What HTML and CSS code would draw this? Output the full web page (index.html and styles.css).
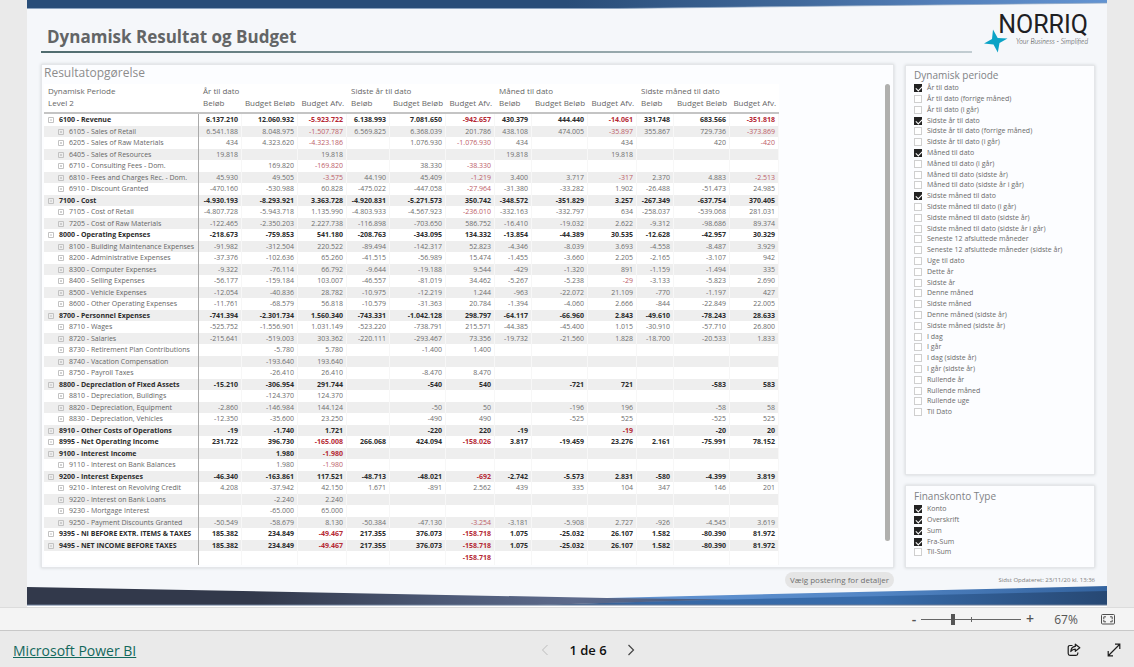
FILE: index.html
```html
<!DOCTYPE html>
<html lang="da">
<head>
<meta charset="utf-8">
<meta name="viewport" content="width=device-width, initial-scale=1">
<title>Dynamisk Resultat og Budget</title>
<link rel="stylesheet" href="styles.css">
</head>
<body>
<div class="app">
  <main class="report">
    <svg class="banner banner-top" viewBox="0 0 1080 9" preserveAspectRatio="none" aria-hidden="true">
      <defs><linearGradient id="top"><stop offset="0.5" stop-color="#294d78"/><stop offset="0.7" stop-color="#3f6798"/><stop offset="0.85" stop-color="#5480ba"/><stop offset="1" stop-color="#6394d2"/></linearGradient></defs>
      <path d="M0 0H1080V3L590 8.500H0Z" fill="url(#top)"/>
      <path d="M0 8.500H590L1080 3" fill="none" stroke="#8ba4c0" stroke-width="0.700"/>
    </svg>

    <header class="report-head">
      <h1 class="report-title">Dynamisk Resultat og Budget</h1>
      <div class="logo">
        <svg class="logo-star" viewBox="0 0 24 24" aria-hidden="true"><path d="M9 0.500 13.700 9 23.500 9.500 15.500 14 13.800 23.500 9.500 15.500 0 14.500 8 10Z" fill="#0aa3c6"/></svg>
        <div class="logo-text"><span class="logo-name">NORRIQ</span><span class="logo-tag">Your Business - Simplified</span></div>
      </div>
    </header>

    <div class="panels">
      <section class="panel matrix">
        <h2 class="matrix-title">Resultatopgørelse</h2>
        <div class="matrix-body">
          <table class="grid">
            <colgroup>
              <col class="c-name"><col class="c-amount"><col class="c-budget"><col class="c-diff">
              <col class="c-amount"><col class="c-budget"><col class="c-diff">
              <col class="c-small"><col class="c-budget"><col class="c-diff">
              <col class="c-small"><col class="c-budget"><col class="c-diff">
            </colgroup>
            <thead>
              <tr class="periods"><th scope="col">Dynamisk Periode</th><th scope="colgroup" colspan="3">År til dato</th><th scope="colgroup" colspan="3">Sidste år til dato</th><th scope="colgroup" colspan="3">Måned til dato</th><th scope="colgroup" colspan="3">Sidste måned til dato</th></tr>
              <tr class="measures"><th scope="col">Level 2</th><th scope="col">Beløb</th><th scope="col">Budget Beløb</th><th scope="col">Budget Afv.</th><th scope="col">Beløb</th><th scope="col">Budget Beløb</th><th scope="col">Budget Afv.</th><th scope="col">Beløb</th><th scope="col">Budget Beløb</th><th scope="col">Budget Afv.</th><th scope="col">Beløb</th><th scope="col">Budget Beløb</th><th scope="col">Budget Afv.</th></tr>
            </thead>
            <tbody id="rows"></tbody>
            <tfoot><tr><th></th><td></td><td></td><td></td><td></td><td></td><td class="neg">-158.718</td><td></td><td></td><td></td><td></td><td></td><td></td></tr></tfoot>
          </table>
          <div class="scrollbar"></div>
        </div>
      </section>

      <aside class="side">
        <fieldset class="panel slicer slicer-period"><legend class="slicer-title">Dynamisk periode</legend><div class="options" id="periods"></div></fieldset>
        <fieldset class="panel slicer"><legend class="slicer-title">Finanskonto Type</legend><div class="options" id="types"></div></fieldset>
      </aside>
    </div>

    <div class="report-foot">
      <div class="foot-main"><button class="pill" type="button">Vælg postering for detaljer</button></div>
      <p class="updated">Sidst Opdateret: 23/11/20 kl. 13:36</p>
    </div>

    <svg class="banner banner-bottom" viewBox="0 0 1080 20" preserveAspectRatio="none" aria-hidden="true">
      <defs>
        <linearGradient id="slate"><stop offset="0.330" stop-color="#32394b"/><stop offset="0.600" stop-color="#4d5a77"/><stop offset="0.780" stop-color="#5d6a8b"/><stop offset="1" stop-color="#44597f"/></linearGradient>
        <linearGradient id="light"><stop offset="0" stop-color="#6395d3"/><stop offset="0.500" stop-color="#5487c6"/><stop offset="1" stop-color="#33639f"/></linearGradient>
        <linearGradient id="mid"><stop offset="0" stop-color="#3f5577"/><stop offset="0.200" stop-color="#3768a5"/><stop offset="0.600" stop-color="#386cab"/><stop offset="1" stop-color="#274873"/></linearGradient>
      </defs>
      <path d="M580 12 1080 0V12L580 17Z" fill="url(#light)"/>
      <path d="M500 19 690 13.800 1080 5V19Z" fill="url(#mid)"/>
      <path d="M0 1 580 12 700 13.500 510 19H0Z" fill="url(#slate)"/>
      <path d="M0 19H1080" stroke="#6d7f99" stroke-width="1"/>
    </svg>
  </main>

  <div class="zoombar">
    <button class="zoom-step" type="button" aria-label="Zoom ud">-</button>
    <input class="zoom-range" type="range" min="0" max="100" value="31" aria-label="Zoom">
    <button class="zoom-step" type="button" aria-label="Zoom ind">+</button>
    <output class="zoom-value">67%</output>
    <button class="icon-button" type="button" aria-label="Tilpas til side">
      <svg width="14" height="11" viewBox="0 0 14 11" fill="none" stroke="#4f4f4f"><rect x="0.500" y="0.500" width="13" height="9.500" rx="1"/><path d="M5 2.800H2.800V5M9 2.800h2.200V5M5 7.800H2.800V5.700M9 7.800h2.200V5.700"/></svg>
    </button>
  </div>

  <footer class="bottom">
    <a class="brand" href="#">Microsoft Power BI</a>
    <nav class="pager" aria-label="Sider">
      <button class="icon-button" type="button" aria-label="Forrige" disabled><svg width="8" height="12" viewBox="0 0 8 12" fill="none" stroke="#bdbdbd"><path d="M6.500 1 1.500 6l5 5"/></svg></button>
      <span class="page-count">1 de 6</span>
      <button class="icon-button" type="button" aria-label="Næste"><svg width="8" height="12" viewBox="0 0 8 12" fill="none" stroke="#444" stroke-width="1.200"><path d="m1.500 1 5 5-5 5"/></svg></button>
    </nav>
    <div class="actions">
      <button class="icon-button" type="button" aria-label="Del"><svg width="14" height="14" viewBox="0 0 14 14" fill="none" stroke="#1d1d1d" stroke-width="1.200" stroke-linejoin="round"><path d="M5.500 2.500H3Q1.200 2.500 1.200 4.300V10.500Q1.200 12.300 3 12.300H9Q10.800 12.300 10.800 10.500V9.500"/><path d="M8.300 1.200 12.800 4.800 8.300 8.300V6.200Q5.500 6.200 3.800 8.500 4.200 3.700 8.300 3.400Z"/></svg></button>
      <button class="icon-button" type="button" aria-label="Fuld skærm"><svg width="14" height="14" viewBox="0 0 14 14" fill="none" stroke="#1d1d1d" stroke-width="1.200"><path d="M1.500 12.500 12.500 1.500M8 1.200h4.800V6M1.200 8v4.800H6"/></svg></button>
    </div>
  </footer>
</div>
<script src="report.js"></script>
</body>
</html>
```

FILE: styles.css
```css
* { box-sizing: border-box; }
body { margin: 0; font-family: "Open Sans", "Noto Sans", sans-serif; color: #666; background: #eaeaea; }
button { font: inherit; color: inherit; border: 0; padding: 0; background: none; cursor: pointer; }
h1, h2, p { margin: 0; }

.app { min-height: 100vh; display: flex; flex-direction: column; }
.report { margin: 0 27px; background: #f5f7fa; border-bottom: 1px solid #fff; display: flex; flex-direction: column; }
.banner { display: block; width: 100%; }
.banner-top { height: 9px; }
.banner-bottom { height: 20px; }

.report-head { display: flex; align-items: flex-start; gap: 12px; padding: 5px 19px 0 14px; height: 55px; }
.report-title { flex: 1; height: 39px; padding: 11px 0 0 6px; font-size: 17px; line-height: 24px; font-weight: 700; color: #636566; border-bottom: 2px solid; border-image: linear-gradient(90deg, #4f6b6e, #c2cdd2) 1; }
.logo { display: flex; }
.logo-star { width: 24px; height: 24px; margin-top: 15px; }
.logo-text { display: flex; flex-direction: column; margin-left: -10px; }
.logo-name { font: 25px/22px Roboto, sans-serif; color: #1e2023; }
.logo-tag { font: italic 300 7px/10px Lato, sans-serif; color: #333; text-align: right; }

.panels { display: flex; gap: 11px; padding: 0 12px 0 14px; }
.panel { background: #fcfdff; border: 1px solid #e4e6e9; box-shadow: 0 0 3px #cfd2d6; }
.matrix { flex: 1; min-width: 0; padding: 0 3px 2px 2px; }
.matrix-title { font-size: 12px; line-height: 16px; font-weight: 400; color: #8c8c8c; padding-bottom: 3px; }
.matrix-body { display: flex; justify-content: space-between; }
.scrollbar { width: 5px; height: 457px; border-radius: 3px; background: #b0b0ae; }

.grid { table-layout: fixed; width: 734px; border-collapse: separate; border-spacing: 0; background: #fff; font-size: 7px; line-height: 10px; }
.c-name { width: 155px; }
.c-amount { width: 43px; }
.c-small { width: 37px; }
.c-budget { width: 56px; }
.c-diff { width: 49px; }
.grid th, .grid td { padding: 0 3px 0 0; white-space: nowrap; font-weight: 400; overflow: hidden; }
.grid thead th { text-align: left; font-size: 8px; padding-left: 4px; }
.grid .periods th { height: 13px; vertical-align: middle; }
.grid .measures th { height: 17px; padding-bottom: 4px; border-bottom: 2px solid #c4c4c4; }
.grid .measures th:nth-child(3n), .grid .measures th:nth-child(3n+1):not(:first-child) { text-align: right; padding-left: 0; }
.grid tbody tr { height: 12px; }
.grid tbody tr:nth-child(even) { height: 11px; background: #eee; }
.grid tbody th { text-align: left; padding-left: 14px; border-right: 1px solid #aaa; }
.grid tbody .lead th { padding-left: 4px; }
.grid td { text-align: right; color: #6e6e6e; border-right: 1px solid #f7f7f7; }
.grid .lead th, .grid .lead td { font-weight: 700; color: #2c2c2c; }
.grid td.neg { color: #bd6068; }
.grid .lead td.neg, .grid tfoot td.neg { color: #b52834; }
.grid tfoot th { height: 14px; border-right: 1px solid #aaa; }
.grid tfoot td { font-weight: 700; }
.toggle { vertical-align: middle; display: inline-flex; margin-right: 5px; }

.side { width: 190px; display: flex; flex-direction: column; gap: 10px; padding-top: 1px; }
.slicer { margin: 0; min-width: 0; padding: 3px 8px 10px; }
.slicer-period { flex: 1; padding-top: 2px; }
.slicer-title { float: left; width: 100%; padding: 0; font-size: 10px; line-height: 14px; color: #808285; }
.options { clear: both; display: flex; flex-direction: column; }
.option { height: 11px; display: flex; align-items: center; gap: 5px; font-size: 7px; line-height: 10px; color: #6b6b6b; white-space: nowrap; }
.option:nth-child(5n) { height: 10px; }
.check { appearance: none; position: relative; width: 8px; height: 8px; margin: 0; border: 1px solid #cfcfcf; background: #fff; }
.check:checked { background: #222; border-color: #222; }
.check:checked::after { content: ""; position: absolute; left: 2px; top: 0; width: 3px; height: 5px; border: solid #fff; border-width: 0 1px 1px 0; transform: rotate(45deg); }

.report-foot { display: flex; gap: 12px; padding: 4px 12px 0 14px; height: 18px; }
.foot-main { flex: 1; display: flex; justify-content: flex-end; }
.pill { height: 16px; padding: 0 5px; border-radius: 8px; background: #e5e5e5; font-size: 8px; line-height: 16px; color: #707070; }
.updated { width: 189px; text-align: right; font-size: 6px; line-height: 16px; color: #808080; }

.zoombar { height: 24px; display: flex; align-items: center; justify-content: flex-end; padding-right: 19px; background: #f4f4f4; border-top: 1px solid #dcdcdc; border-bottom: 1px solid #c8c8c8; color: #555; }
.zoom-step { width: 10px; font-size: 14px; line-height: 20px; font-weight: 600; }
.zoom-range { appearance: none; width: 100px; height: 12px; margin: 0 4px 0 2px; background: linear-gradient(#666, #666) 50% 50% / 100% 1px no-repeat, linear-gradient(#666, #666) 50% 50% / 1px 5px no-repeat; }
.zoom-range::-webkit-slider-thumb { appearance: none; width: 4px; height: 11px; background: #555; }
.zoom-value { width: 66px; padding-right: 4px; text-align: center; font-size: 12px; }
.icon-button { display: inline-flex; align-items: center; justify-content: center; }

.bottom { flex: 1; min-height: 36px; display: grid; grid-template-columns: 1fr auto 1fr; align-items: center; padding: 2px 13px 0; }
.brand { font-size: 14px; color: #13685c; justify-self: start; }
.pager { display: flex; align-items: center; gap: 20px; margin-left: 42px; font-size: 13px; font-weight: 600; color: #111; }
.actions { justify-self: end; display: flex; gap: 26px; }
```

FILE: report.js
```js
// Account rows: name, then four periods of amount, budget and deviation.
// A leading "*" marks a bold parent account.
const accounts = `*6100 - Revenue|6.137.210|12.060.932|-5.923.722|6.138.993|7.081.650|-942.657|430.379|444.440|-14.061|331.748|683.566|-351.818
6105 - Sales of Retail|6.541.188|8.048.975|-1.507.787|6.569.825|6.368.039|201.786|438.108|474.005|-35.897|355.867|729.736|-373.869
6205 - Sales of Raw Materials|434|4.323.620|-4.323.186||1.076.930|-1.076.930|434||434||420|-420
6405 - Sales of Resources|19.818||19.818||||19.818||19.818|||
6710 - Consulting Fees - Dom.||169.820|-169.820||38.330|-38.330||||||
6810 - Fees and Charges Rec. - Dom.|45.930|49.505|-3.575|44.190|45.409|-1.219|3.400|3.717|-317|2.370|4.883|-2.513
6910 - Discount Granted|-470.160|-530.988|60.828|-475.022|-447.058|-27.964|-31.380|-33.282|1.902|-26.488|-51.473|24.985
*7100 - Cost|-4.930.193|-8.293.921|3.363.728|-4.920.831|-5.271.573|350.742|-348.572|-351.829|3.257|-267.349|-637.754|370.405
7105 - Cost of Retail|-4.807.728|-5.943.718|1.135.990|-4.803.933|-4.567.923|-236.010|-332.163|-332.797|634|-258.037|-539.068|281.031
7205 - Cost of Raw Materials|-122.465|-2.350.203|2.227.738|-116.898|-703.650|586.752|-16.410|-19.032|2.622|-9.312|-98.686|89.374
*8000 - Operating Expenses|-218.673|-759.853|541.180|-208.763|-343.095|134.332|-13.854|-44.389|30.535|-12.628|-42.957|30.329
8100 - Building Maintenance Expenses|-91.982|-312.504|220.522|-89.494|-142.317|52.823|-4.346|-8.039|3.693|-4.558|-8.487|3.929
8200 - Administrative Expenses|-37.376|-102.636|65.260|-41.515|-56.989|15.474|-1.455|-3.660|2.205|-2.165|-3.107|942
8300 - Computer Expenses|-9.322|-76.114|66.792|-9.644|-19.188|9.544|-429|-1.320|891|-1.159|-1.494|335
8400 - Selling Expenses|-56.177|-159.184|103.007|-46.557|-81.019|34.462|-5.267|-5.238|-29|-3.133|-5.823|2.690
8500 - Vehicle Expenses|-12.054|-40.836|28.782|-10.975|-12.219|1.244|-963|-22.072|21.109|-770|-1.197|427
8600 - Other Operating Expenses|-11.761|-68.579|56.818|-10.579|-31.363|20.784|-1.394|-4.060|2.666|-844|-22.849|22.005
*8700 - Personnel Expenses|-741.394|-2.301.734|1.560.340|-743.331|-1.042.128|298.797|-64.117|-66.960|2.843|-49.610|-78.243|28.633
8710 - Wages|-525.752|-1.556.901|1.031.149|-523.220|-738.791|215.571|-44.385|-45.400|1.015|-30.910|-57.710|26.800
8720 - Salaries|-215.641|-519.003|303.362|-220.111|-293.467|73.356|-19.732|-21.560|1.828|-18.700|-20.533|1.833
8730 - Retirement Plan Contributions||-5.780|5.780||-1.400|1.400||||||
8740 - Vacation Compensation||-193.640|193.640|||||||||
8750 - Payroll Taxes||-26.410|26.410||-8.470|8.470||||||
*8800 - Depreciation of Fixed Assets|-15.210|-306.954|291.744||-540|540||-721|721||-583|583
8810 - Depreciation, Buildings||-124.370|124.370|||||||||
8820 - Depreciation, Equipment|-2.860|-146.984|144.124||-50|50||-196|196||-58|58
8830 - Depreciation, Vehicles|-12.350|-35.600|23.250||-490|490||-525|525||-525|525
*8910 - Other Costs of Operations|-19|-1.740|1.721||-220|220|-19||-19||-20|20
*8995 - Net Operating Income|231.722|396.730|-165.008|266.068|424.094|-158.026|3.817|-19.459|23.276|2.161|-75.991|78.152
*9100 - Interest Income||1.980|-1.980|||||||||
9110 - Interest on Bank Balances||1.980|-1.980|||||||||
*9200 - Interest Expenses|-46.340|-163.861|117.521|-48.713|-48.021|-692|-2.742|-5.573|2.831|-580|-4.399|3.819
9210 - Interest on Revolving Credit|4.208|-37.942|42.150|1.671|-891|2.562|439|335|104|347|146|201
9220 - Interest on Bank Loans||-2.240|2.240|||||||||
9230 - Mortgage Interest||-65.000|65.000|||||||||
9250 - Payment Discounts Granted|-50.549|-58.679|8.130|-50.384|-47.130|-3.254|-3.181|-5.908|2.727|-926|-4.545|3.619
*9395 - NI BEFORE EXTR. ITEMS & TAXES|185.382|234.849|-49.467|217.355|376.073|-158.718|1.075|-25.032|26.107|1.582|-80.390|81.972
*9495 - NET INCOME BEFORE TAXES|185.382|234.849|-49.467|217.355|376.073|-158.718|1.075|-25.032|26.107|1.582|-80.390|81.972`;

const escapeText = (s) => s.replace(/&/g, "&amp;");

const toggle = (open) => `<button class="toggle" type="button" aria-label="${open ? "Skjul" : "Vis"}"><svg width="6" height="6" viewBox="0 0 6 6" fill="none" stroke="#c2c2c2"><path d="M.5.5h5v5h-5zM2 3h2${open ? "" : "M3 2v2"}"/></svg></button>`;

document.getElementById("rows").innerHTML = accounts.split("\n").map((line) => {
  const [name, ...values] = line.split("|");
  const lead = name.startsWith("*");
  const cells = values.map((v, i) => `<td${i % 3 === 2 && v.startsWith("-") ? ' class="neg"' : ""}>${v}</td>`).join("");
  return `<tr${lead ? ' class="lead"' : ""}><th scope="row">${toggle(lead)}${escapeText(name.replace("*", ""))}</th>${cells}</tr>`;
}).join("");

const periods = ["*År til dato", "År til dato (forrige måned)", "År til dato (i går)", "*Sidste år til dato", "Sidste år til dato (forrige måned)", "Sidste år til dato (i går)", "*Måned til dato", "Måned til dato (i går)", "Måned til dato (sidste år)", "Måned til dato (sidste år i går)", "*Sidste måned til dato", "Sidste måned til dato (i går)", "Sidste måned til dato (sidste år)", "Sidste måned til dato (sidste år i går)", "Seneste 12 afsluttede måneder", "Seneste 12 afsluttede måneder (sidste år)", "Uge til dato", "Dette år", "Sidste år", "Denne måned", "Sidste måned", "Denne måned (sidste år)", "Sidste måned (sidste år)", "I dag", "I går", "I dag (sidste år)", "I går (sidste år)", "Rullende år", "Rullende måned", "Rullende uge", "Til Dato"];
const types = ["*Konto", "*Overskrift", "*Sum", "*Fra-Sum", "Til-Sum"];

function fillOptions(id, names) {
  document.getElementById(id).innerHTML = names.map((n) =>
    `<label class="option"><input class="check" type="checkbox"${n.startsWith("*") ? " checked" : ""}>${n.replace("*", "")}</label>`).join("");
}
fillOptions("periods", periods);
fillOptions("types", types);
```
